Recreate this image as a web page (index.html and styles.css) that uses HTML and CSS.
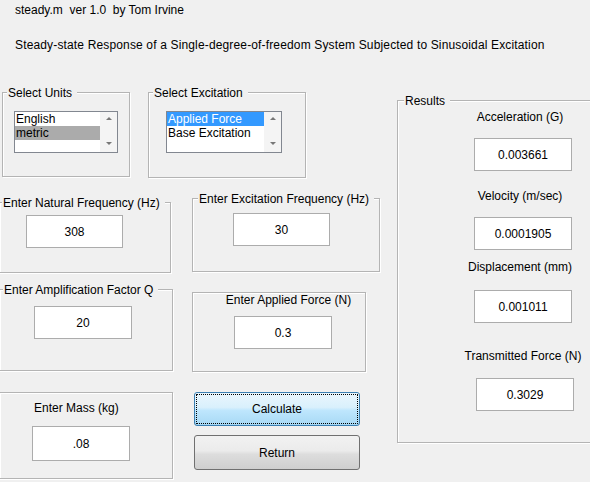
FILE: index.html
```html
<!DOCTYPE html>
<html>
<head>
<meta charset="utf-8">
<title>steady.m</title>
<link rel="stylesheet" href="styles.css">
</head>
<body>
<div class="header">
  <div class="title">steady.m  ver 1.0  by Tom Irvine</div>
  <div class="subtitle">Steady-state Response of a Single-degree-of-freedom System Subjected to Sinusoidal Excitation</div>
</div>
<div class="main">
  <div class="left">
    <div class="row">
      <div class="panel units">
        <span class="legend">Select Units</span>
        <div class="listbox">
          <div class="items">
            <div class="item">English</div>
            <div class="item sel-gray">metric</div>
          </div>
          <div class="scroll"><span class="arrow up"></span><span class="arrow down"></span></div>
        </div>
      </div>
      <div class="panel excitation">
        <span class="legend">Select Excitation</span>
        <div class="listbox">
          <div class="items">
            <div class="item sel-blue">Applied Force</div>
            <div class="item">Base Excitation</div>
          </div>
          <div class="scroll"><span class="arrow up"></span><span class="arrow down"></span></div>
        </div>
      </div>
    </div>
    <div class="row row2">
      <div class="panel natfreq">
        <span class="legend">Enter Natural Frequency (Hz)</span>
        <div class="edit">308</div>
      </div>
      <div class="panel excfreq">
        <span class="legend">Enter Excitation Frequency (Hz)</span>
        <div class="edit">30</div>
      </div>
    </div>
    <div class="row row3">
      <div class="panel ampq">
        <span class="legend">Enter Amplification Factor Q</span>
        <div class="edit">20</div>
      </div>
      <div class="panel appforce">
        <div class="inlabel">Enter Applied Force (N)</div>
        <div class="edit">0.3</div>
      </div>
    </div>
    <div class="row row4">
      <div class="panel mass">
        <div class="inlabel">Enter Mass (kg)</div>
        <div class="edit">.08</div>
      </div>
      <div class="buttons">
        <button class="btn calc">Calculate</button>
        <button class="btn ret">Return</button>
      </div>
    </div>
  </div>
  <div class="panel results">
    <span class="legend">Results</span>
    <div class="rcol">
      <div class="rlabel r1">Acceleration (G)</div>
      <div class="edit rbox b1">0.003661</div>
      <div class="rlabel r2">Velocity (m/sec)</div>
      <div class="edit rbox b2">0.0001905</div>
      <div class="rlabel r3">Displacement (mm)</div>
      <div class="edit rbox b3">0.001011</div>
      <div class="rlabel r4">Transmitted Force (N)</div>
      <div class="edit rbox b4">0.3029</div>
    </div>
  </div>
</div>
</body>
</html>
```
FILE: styles.css
```css
html, body {
  margin: 0;
  overflow: hidden;
}
body {
  width: 590px;
  height: 482px;
  background: #f0f0f0;
  font-family: "Liberation Sans", Arial, sans-serif;
  font-size: 12px;
  line-height: 14px;
  color: #000;
}

.header {
  padding: 3px 0 0 15px;
}
.title {
  white-space: pre;
}
.subtitle {
  margin-top: 21px;
  white-space: nowrap;
  letter-spacing: 0.15px;
}

.main {
  display: flex;
  align-items: flex-start;
  margin-top: 40px;
}
.left {
  flex: 0 0 380px;
  display: flex;
  flex-direction: column;
}
.row {
  display: flex;
  align-items: flex-start;
}
.row2 { margin-top: 20px; }
.row3 { margin-top: 16px; }
.row4 { margin-top: 20px; }

.panel {
  position: relative;
  box-sizing: border-box;
  flex-shrink: 0;
  border: 1px solid #b4b4b4;
  box-shadow: inset 1px 1px 0 #fff, 1px 1px 0 #fff;
}
.legend {
  position: absolute;
  top: -7px;
  left: 4px;
  padding: 0 5px 0 1px;
  background: #f0f0f0;
  white-space: nowrap;
}

.units {
  width: 128px;
  height: 85px;
  margin-left: 2px;
}
.excitation {
  width: 158px;
  height: 86px;
  margin-left: 18px;
}
.natfreq {
  width: 172px;
  height: 71px;
  margin-left: -1px;
  margin-top: 4px;
}
.natfreq .legend { left: 2px; }
.excfreq {
  width: 188px;
  height: 74px;
  margin-left: 21px;
}
.excfreq .legend { left: 5px; }
.ampq {
  width: 174px;
  height: 82px;
  margin-left: -1px;
}
.ampq .legend { left: 3px; }
.appforce {
  width: 174px;
  height: 80px;
  margin-left: 19px;
  margin-top: 3px;
}
.mass {
  width: 174px;
  height: 87px;
  margin-left: -1px;
}
.results {
  width: 210px;
  height: 343px;
  margin-left: 17px;
  margin-top: 8px;
}
.results .legend { left: 6px; }

/* list boxes */
.listbox {
  box-sizing: border-box;
  height: 42px;
  border: 1px solid #828790;
  background: #fff;
  display: flex;
}
.units .listbox {
  width: 104px;
  margin: 18px 0 0 11px;
}
.excitation .listbox {
  width: 116px;
  margin: 18px 0 0 17px;
}
.items {
  flex: 1;
}
.item {
  height: 14px;
  line-height: 14px;
  padding-left: 1px;
  white-space: nowrap;
}
.sel-gray {
  background: #ababab;
}
.sel-blue {
  background: #3399ff;
  color: #fff;
}
.scroll {
  box-sizing: border-box;
  width: 17px;
  background: #f4f4f4;
  display: flex;
  flex-direction: column;
  justify-content: space-between;
  align-items: center;
  padding: 5px 0 7px;
}
.arrow {
  width: 0;
  height: 0;
  border-left: 3px solid transparent;
  border-right: 3px solid transparent;
}
.arrow.up { border-bottom: 3px solid #777; }
.arrow.down { border-top: 3px solid #777; }

/* edit boxes */
.edit {
  box-sizing: border-box;
  width: 97px;
  height: 33px;
  border: 1px solid #acacac;
  background: #fff;
  display: flex;
  align-items: center;
  justify-content: center;
  white-space: nowrap;
}
.natfreq .edit { margin: 12px 0 0 26px; }
.excfreq .edit { margin: 14px 0 0 40px; }
.ampq .edit { margin: 16px 0 0 34px; width: 98px; }
.appforce .inlabel {
  padding-left: 19px;
  text-align: center;
  white-space: nowrap;
}
.appforce .edit { margin: 9px 0 0 41px; width: 98px; }
.mass .inlabel {
  margin-top: 8px;
  padding-left: 34px;
  white-space: nowrap;
}
.mass .edit { margin: 11px 0 0 32px; width: 98px; height: 35px; }

/* results */
.rcol {
  width: 130px;
  margin-left: 60px;
  padding-top: 9px;
  text-align: center;
}
.rlabel {
  white-space: nowrap;
  padding-right: 6px;
}
.rlabel.r4 { padding-right: 0; }
.rbox {
  width: 98px;
  margin: 0 auto;
}
.b1 { margin-top: 14px; }
.r2 { margin-top: 18px; }
.b2 { margin-top: 14px; }
.r3 { margin-top: 10px; }
.b3 { margin-top: 16px; }
.r4 { margin-top: 26px; }
.b4 { margin: 15px 0 0 18px; }

/* buttons */
.buttons {
  flex: 0 0 166px;
  margin-left: 21px;
  display: flex;
  flex-direction: column;
  gap: 9px;
}
.btn {
  box-sizing: border-box;
  width: 166px;
  margin: 0;
  padding: 0;
  border-radius: 3px;
  font: inherit;
  color: #000;
  display: flex;
  align-items: center;
  justify-content: center;
}
.calc {
  height: 34px;
  border: 1px solid #3c7fb1;
  background: linear-gradient(#eaf6fd 0%, #d9f0fc 45%, #bee6fd 55%, #a7d9f5 100%);
  outline: 1px dotted #000;
  outline-offset: -3px;
}
.ret {
  height: 35px;
  border: 1px solid #707070;
  background: linear-gradient(#f2f2f2 0%, #ebebeb 45%, #dddddd 55%, #cfcfcf 100%);
}
```
